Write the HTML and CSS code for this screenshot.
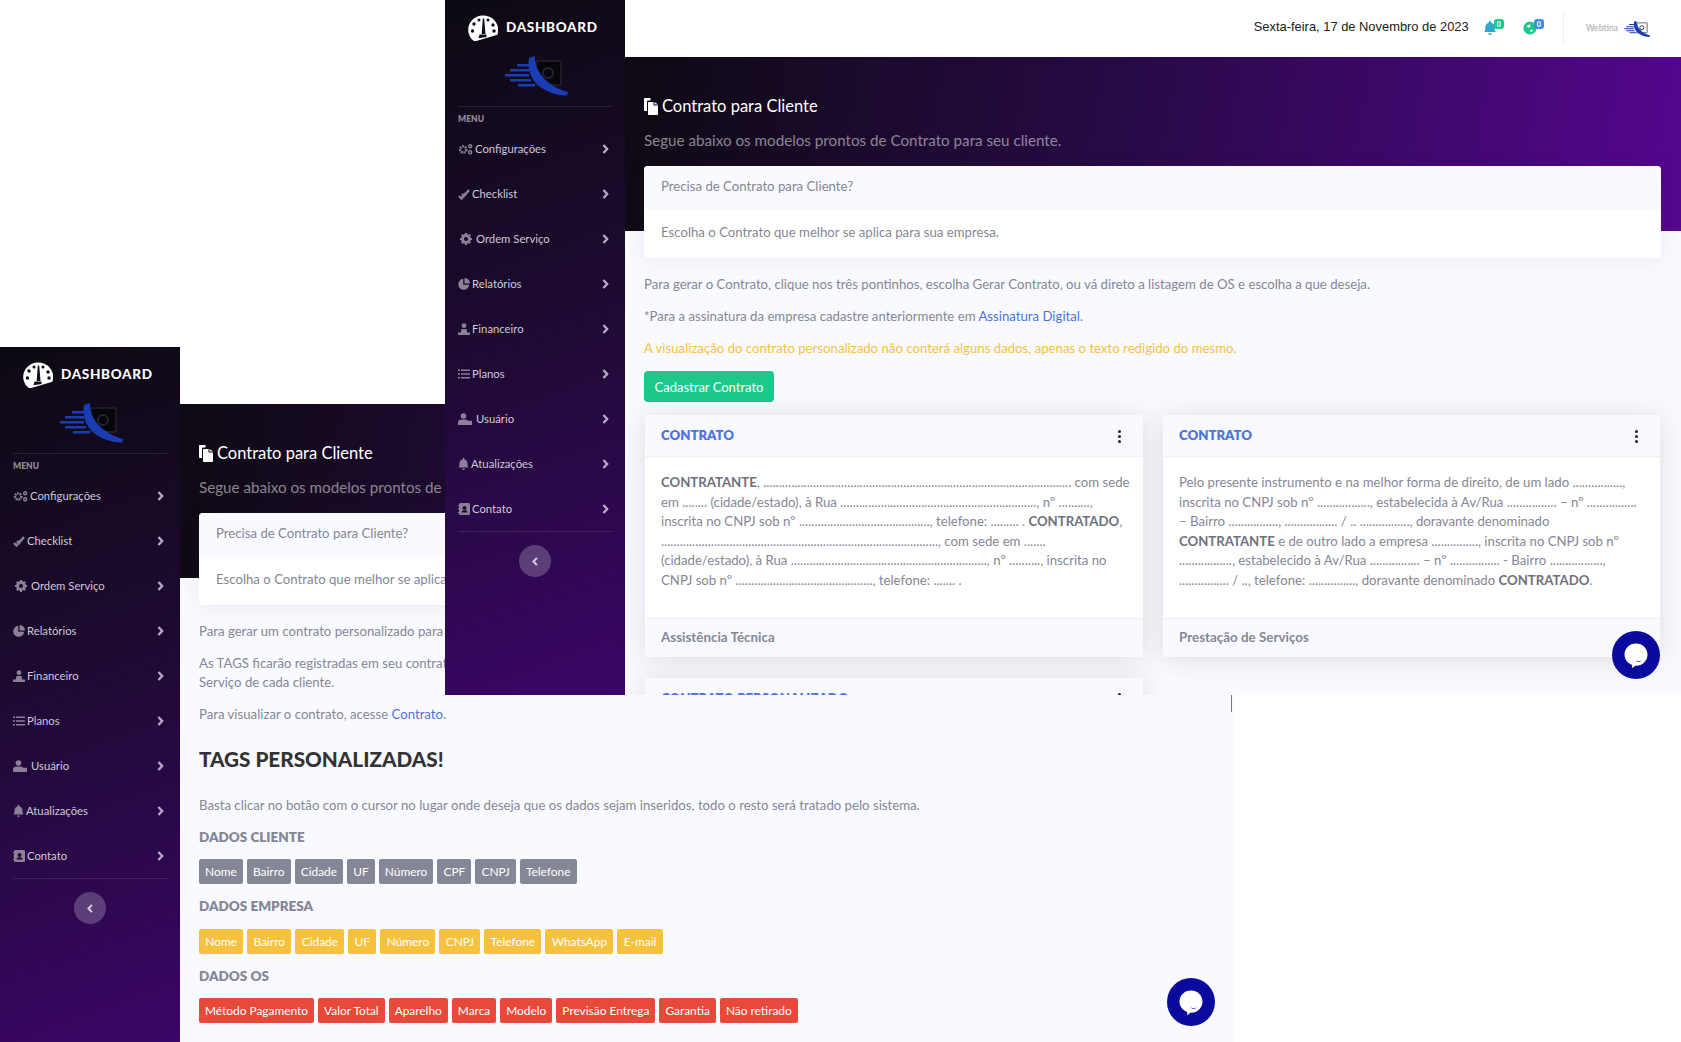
FILE: index.html
```html
<!DOCTYPE html>
<html lang="pt-BR">
<head>
    <meta charset="UTF-8">
    <meta name="viewport" content="width=device-width, initial-scale=1.0">
    <title>Contrato para Cliente</title>
    <link rel="stylesheet" href="styles.css">
</head>
<body>
    <svg class="sprite" xmlns="http://www.w3.org/2000/svg">
        <symbol id="i-gauge" viewBox="0 0 30 26">
            <path fill="#fff" d="M4 24.5C1.5 22 0 18.6 0 15 0 6.9 6.7.5 15 .5S30 6.900 30 15c0 2.200-.5 4.300-1.400 6.200L5.500 25.500z" transform="rotate(-6 15 13)"/>
            <g fill="#120c1c">
                <circle cx="6" cy="9" r="1.700"/><circle cx="11" cy="5" r="1.500"/><circle cx="20" cy="5" r="1.500"/><circle cx="25" cy="10" r="1.700"/><circle cx="4.500" cy="16" r="1.700"/><circle cx="26" cy="16" r="1.700"/>
                <path d="M14.800 3.500h1.400l1.300 15.500h-3.800z"/><path d="M11.500 19.500h7v2.500l-8 1.300z"/>
            </g>
        </symbol>
        <symbol id="i-logo" viewBox="0 0 66 42">
            <rect x="34" y="6" width="25" height="24" rx="1" fill="var(--phone-fill)" stroke="var(--phone-line)" stroke-width="1.500"/>
            <circle cx="46" cy="18" r="5" fill="none" stroke="var(--phone-line)" stroke-width="2"/>
            <g fill="#1a3db4">
                <path d="M15 9h15v2.500H15zM8 14h19v2.500H8zM3 19h24v2.500H3zM8 24h21v2.500H8zM16 29h17v2.500H16z"/>
                <path d="M27 3l6-2C32 15 44 31 66 37l-1 3.500C42 40 23 25 27 3z"/>
            </g>
        </symbol>
        <symbol id="i-cogs" viewBox="0 0 16 12">
            <circle cx="5.500" cy="6.500" r="3.300" fill="none" stroke="currentColor" stroke-width="2.600" stroke-dasharray="2 .8"/>
            <circle cx="13" cy="3" r="1.600" fill="none" stroke="currentColor" stroke-width="1.500"/>
            <circle cx="13" cy="9.500" r="1.600" fill="none" stroke="currentColor" stroke-width="1.500"/>
        </symbol>
        <symbol id="i-check" viewBox="0 0 12 12">
            <path fill="none" stroke="currentColor" stroke-width="2.400" d="M1 8l2.500 2.500L8 5M4 6l2 2 5-6"/>
        </symbol>
        <symbol id="i-cog" viewBox="0 0 12 12">
            <circle cx="6" cy="6" r="3.500" fill="none" stroke="currentColor" stroke-width="3"/>
            <path stroke="currentColor" stroke-width="2" d="M6 0v2M6 10v2M0 6h2M10 6h2M1.800 1.800l1.400 1.400M8.800 8.800l1.400 1.400M1.800 10.200l1.400-1.400M8.800 3.200l1.400-1.400"/>
        </symbol>
        <symbol id="i-pie" viewBox="0 0 12 12">
            <path fill="currentColor" d="M5.200.8v6h6A5.500 5.500 0 1 1 5.200.8zM6.500 0A5.500 5.500 0 0 1 12 5.500H6.500z"/>
        </symbol>
        <symbol id="i-money" viewBox="0 0 12 12">
            <circle cx="6" cy="2.700" r="2.400" fill="currentColor"/>
            <path fill="currentColor" d="M3.500 6h5l.8 3.500H12V12H0V9.500h2.700z"/>
        </symbol>
        <symbol id="i-list" viewBox="0 0 12 10">
            <path fill="currentColor" d="M0 .5h2v1.500H0zM3 .5h9v1.500H3zM0 4.200h2v1.500H0zM3 4.200h9v1.500H3zM0 8h2v1.500H0zM3 8h9v1.500H3z"/>
        </symbol>
        <symbol id="i-user" viewBox="0 0 14 12">
            <circle cx="5.500" cy="3" r="2.800" fill="currentColor"/>
            <path fill="currentColor" d="M0 12V9.500C0 7.500 1.500 6.500 3.500 6.500h4c1 0 2 .4 2.500 1.200H14V12z"/>
        </symbol>
        <symbol id="i-bell" viewBox="0 0 10 12">
            <path fill="currentColor" d="M5 0c.6 0 1 .4 1 1v.4c1.800.4 3 2 3 3.800 0 2.800.5 3.600 1 4.300H0c.5-.7 1-1.500 1-4.300 0-1.800 1.200-3.400 3-3.800V1c0-.6.4-1 1-1zM3.500 10.500h3C6.500 11.400 5.800 12 5 12s-1.500-.6-1.500-1.500z"/>
        </symbol>
        <symbol id="i-book" viewBox="0 0 12 12">
            <rect x="1" y="0" width="11" height="12" rx="1.500" fill="currentColor"/>
            <circle cx="6.500" cy="5" r="2" fill="#1a0b2c"/>
            <path fill="#1a0b2c" d="M3.500 9.500c0-1.500 1.200-2.200 3-2.200s3 .7 3 2.200z"/>
            <path fill="currentColor" d="M0 2h2v1H0zM0 5.500h2v1H0zM0 9h2v1H0z"/>
        </symbol>
        <symbol id="i-chevron" viewBox="0 0 8 12">
            <path fill="none" stroke="currentColor" stroke-width="2.800" d="M1.500 1.200L6 6l-4.500 4.800"/>
        </symbol>
        <symbol id="i-copy" viewBox="0 0 14 17">
            <path fill="#fff" d="M1 0h5.500v2.500H4.200C3.500 2.500 3 3 3 3.700V13H1c-.6 0-1-.4-1-1V1c0-.6.4-1 1-1z"/>
            <path fill="#fff" d="M5 4h4.500v3.500H14V16c0 .6-.4 1-1 1H5c-.6 0-1-.4-1-1V5c0-.6.4-1 1-1zM10.500 4L14 6.500h-3.500z"/>
        </symbol>
        <symbol id="i-link" viewBox="0 0 15 15">
            <circle cx="7.500" cy="7.500" r="7" fill="currentColor"/>
            <path fill="#fff" d="M4 5.500l3-2 1.200 2-2.200 2zM7.500 10l2.200-1.200 1 2-2.200 1.200z"/>
        </symbol>
        <symbol id="i-chat" viewBox="0 0 48 48">
            <circle cx="24" cy="24" r="24" fill="#0b0a9e"/>
            <path fill="#fff" d="M24 12.500c6.400 0 11.500 4.900 11.500 11 0 6.300-5.100 11.300-11.500 11.300h-.8l-3 2.500v-3.300c-4.500-1.600-7.700-5.700-7.700-10.500 0-6.100 5.100-11 11.500-11z"/>
            <path fill="#0b0a9e" d="M24 29.500c1.600.9 3.600.9 5.200 0-.5 1.800-4.700 1.800-5.200 0z"/>
        </symbol>
    </svg>

    <!-- tela de tras: tags personalizadas -->
    <section class="window window-back">
        <aside class="sidebar">
            <div class="brand">
                <svg class="brand-icon"><use href="#i-gauge"/></svg>
                <span class="brand-name">DASHBOARD</span>
            </div>
            <div class="sidebar-logo"><svg class="logo-img"><use href="#i-logo"/></svg></div>
            <div class="menu-label">MENU</div>
            <nav class="menu">
                <a class="menu-item"><svg class="ico ico-cogs"><use href="#i-cogs"/></svg><span>Configurações</span><svg class="chevron"><use href="#i-chevron"/></svg></a>
                <a class="menu-item"><svg class="ico ico-check"><use href="#i-check"/></svg><span>Checklist</span><svg class="chevron"><use href="#i-chevron"/></svg></a>
                <a class="menu-item"><svg class="ico ico-cog"><use href="#i-cog"/></svg><span>Ordem Serviço</span><svg class="chevron"><use href="#i-chevron"/></svg></a>
                <a class="menu-item"><svg class="ico ico-pie"><use href="#i-pie"/></svg><span>Relatórios</span><svg class="chevron"><use href="#i-chevron"/></svg></a>
                <a class="menu-item"><svg class="ico ico-money"><use href="#i-money"/></svg><span>Financeiro</span><svg class="chevron"><use href="#i-chevron"/></svg></a>
                <a class="menu-item"><svg class="ico ico-list"><use href="#i-list"/></svg><span>Planos</span><svg class="chevron"><use href="#i-chevron"/></svg></a>
                <a class="menu-item"><svg class="ico ico-user"><use href="#i-user"/></svg><span>Usuário</span><svg class="chevron"><use href="#i-chevron"/></svg></a>
                <a class="menu-item"><svg class="ico ico-bell"><use href="#i-bell"/></svg><span>Atualizações</span><svg class="chevron"><use href="#i-chevron"/></svg></a>
                <a class="menu-item"><svg class="ico ico-book"><use href="#i-book"/></svg><span>Contato</span><svg class="chevron"><use href="#i-chevron"/></svg></a>
            </nav>
            <div class="sidebar-end"><button class="toggle"><svg class="toggle-icon"><use href="#i-chevron"/></svg></button></div>
        </aside>
        <div class="main">
            <div class="topbar"></div>
            <div class="hero">
                <h1 class="page-title"><svg class="title-icon"><use href="#i-copy"/></svg>Contrato para Cliente</h1>
                <p class="page-sub">Segue abaixo os modelos prontos de Contrato para seu cliente.</p>
            </div>
            <div class="content">
                <div class="intro-card">
                    <div class="intro-head">Precisa de Contrato para Cliente?</div>
                    <div class="intro-body">Escolha o Contrato que melhor se aplica para sua empresa.</div>
                </div>
                <p class="txt">Para gerar um contrato personalizado para seu cliente, utilize as TAGS abaixo.</p>
                <p class="txt">As TAGS ficarão registradas em seu contrato e serão preenchidas automaticamente na Ordem de<br>Serviço de cada cliente.</p>
                <p class="txt">Para visualizar o contrato, acesse <a class="link">Contrato</a>.</p>
                <h2 class="tags-title">TAGS PERSONALIZADAS!</h2>
                <p class="txt txt-basta">Basta clicar no botão com o cursor no lugar onde deseja que os dados sejam inseridos, todo o resto será tratado pelo sistema.</p>
                <h3 class="tag-label">DADOS CLIENTE</h3>
                <div class="tag-row">
                    <span class="tag tag-gray">Nome</span><span class="tag tag-gray">Bairro</span><span class="tag tag-gray">Cidade</span><span class="tag tag-gray">UF</span><span class="tag tag-gray">Número</span><span class="tag tag-gray">CPF</span><span class="tag tag-gray">CNPJ</span><span class="tag tag-gray">Telefone</span>
                </div>
                <h3 class="tag-label">DADOS EMPRESA</h3>
                <div class="tag-row">
                    <span class="tag tag-yellow">Nome</span><span class="tag tag-yellow">Bairro</span><span class="tag tag-yellow">Cidade</span><span class="tag tag-yellow">UF</span><span class="tag tag-yellow">Número</span><span class="tag tag-yellow">CNPJ</span><span class="tag tag-yellow">Telefone</span><span class="tag tag-yellow">WhatsApp</span><span class="tag tag-yellow">E-mail</span>
                </div>
                <h3 class="tag-label">DADOS OS</h3>
                <div class="tag-row">
                    <span class="tag tag-red">Método Pagamento</span><span class="tag tag-red">Valor Total</span><span class="tag tag-red">Aparelho</span><span class="tag tag-red">Marca</span><span class="tag tag-red">Modelo</span><span class="tag tag-red">Previsão Entrega</span><span class="tag tag-red">Garantia</span><span class="tag tag-red">Não retirado</span>
                </div>
            </div>
        </div>
        <svg class="chat chat-back"><use href="#i-chat"/></svg>
        <div class="caret"></div>
    </section>

    <!-- tela da frente: contratos -->
    <section class="window window-front">
        <aside class="sidebar">
            <div class="brand">
                <svg class="brand-icon"><use href="#i-gauge"/></svg>
                <span class="brand-name">DASHBOARD</span>
            </div>
            <div class="sidebar-logo"><svg class="logo-img"><use href="#i-logo"/></svg></div>
            <div class="menu-label">MENU</div>
            <nav class="menu">
                <a class="menu-item"><svg class="ico ico-cogs"><use href="#i-cogs"/></svg><span>Configurações</span><svg class="chevron"><use href="#i-chevron"/></svg></a>
                <a class="menu-item"><svg class="ico ico-check"><use href="#i-check"/></svg><span>Checklist</span><svg class="chevron"><use href="#i-chevron"/></svg></a>
                <a class="menu-item"><svg class="ico ico-cog"><use href="#i-cog"/></svg><span>Ordem Serviço</span><svg class="chevron"><use href="#i-chevron"/></svg></a>
                <a class="menu-item"><svg class="ico ico-pie"><use href="#i-pie"/></svg><span>Relatórios</span><svg class="chevron"><use href="#i-chevron"/></svg></a>
                <a class="menu-item"><svg class="ico ico-money"><use href="#i-money"/></svg><span>Financeiro</span><svg class="chevron"><use href="#i-chevron"/></svg></a>
                <a class="menu-item"><svg class="ico ico-list"><use href="#i-list"/></svg><span>Planos</span><svg class="chevron"><use href="#i-chevron"/></svg></a>
                <a class="menu-item"><svg class="ico ico-user"><use href="#i-user"/></svg><span>Usuário</span><svg class="chevron"><use href="#i-chevron"/></svg></a>
                <a class="menu-item"><svg class="ico ico-bell"><use href="#i-bell"/></svg><span>Atualizações</span><svg class="chevron"><use href="#i-chevron"/></svg></a>
                <a class="menu-item"><svg class="ico ico-book"><use href="#i-book"/></svg><span>Contato</span><svg class="chevron"><use href="#i-chevron"/></svg></a>
            </nav>
            <div class="sidebar-end"><button class="toggle"><svg class="toggle-icon"><use href="#i-chevron"/></svg></button></div>
        </aside>
        <div class="main">
            <div class="topbar">
                <span class="today">Sexta-feira, 17 de Novembro de 2023</span>
                <span class="top-icon">
                    <svg class="top-svg bell-blue"><use href="#i-bell"/></svg>
                    <span class="badge badge-green">0</span>
                </span>
                <span class="top-icon">
                    <svg class="top-svg link-green"><use href="#i-link"/></svg>
                    <span class="badge badge-blue">0</span>
                </span>
                <span class="top-divider"></span>
                <span class="user-name">Webtina</span>
                <svg class="user-logo"><use href="#i-logo"/></svg>
            </div>
            <div class="hero">
                <h1 class="page-title"><svg class="title-icon"><use href="#i-copy"/></svg>Contrato para Cliente</h1>
                <p class="page-sub">Segue abaixo os modelos prontos de Contrato para seu cliente.</p>
            </div>
            <div class="content">
                <div class="intro-card">
                    <div class="intro-head">Precisa de Contrato para Cliente?</div>
                    <div class="intro-body">Escolha o Contrato que melhor se aplica para sua empresa.</div>
                </div>
                <p class="txt">Para gerar o Contrato, clique nos três pontinhos, escolha Gerar Contrato, ou vá direto a listagem de OS e escolha a que deseja.</p>
                <p class="txt">*Para a assinatura da empresa cadastre anteriormente em <a class="link">Assinatura Digital</a>.</p>
                <p class="txt txt-warn">A visualização do contrato personalizado não conterá alguns dados, apenas o texto redigido do mesmo.</p>
                <button class="btn-green">Cadastrar Contrato</button>
                <div class="contract-grid">
                    <div class="contract-card">
                        <div class="contract-head"><span>CONTRATO</span><span class="kebab"><i></i><i></i><i></i></span></div>
                        <div class="contract-body">
                            <b>CONTRATANTE</b>, ................................................................................................... com sede<br>
                            em ........ (cidade/estado), à Rua ..............................................................., nº ..........,<br>
                            inscrita no CNPJ sob nº .........................................., telefone: ......... . <b>CONTRATADO</b>,<br>
                            ........................................................................................., com sede em .......<br>
                            (cidade/estado), à Rua ..............................................................., nº .........., inscrita no<br>
                            CNPJ sob nº ............................................, telefone: ....... .
                        </div>
                        <div class="contract-foot">Assistência Técnica</div>
                    </div>
                    <div class="contract-card">
                        <div class="contract-head"><span>CONTRATO</span><span class="kebab"><i></i><i></i><i></i></span></div>
                        <div class="contract-body">
                            Pelo presente instrumento e na melhor forma de direito, de um lado ................,<br>
                            inscrita no CNPJ sob nº ................., estabelecida à Av/Rua ................ – nº ................<br>
                            – Bairro ................, ................. / .. ................, doravante denominado<br>
                            <b>CONTRATANTE</b> e de outro lado a empresa ..............., inscrita no CNPJ sob nº<br>
                            ................., estabelecido à Av/Rua ................ – nº ................ - Bairro .................,<br>
                            ................ / .., telefone: ..............., doravante denominado <b>CONTRATADO</b>.
                        </div>
                        <div class="contract-foot">Prestação de Serviços</div>
                    </div>
                    <div class="contract-card">
                        <div class="contract-head"><span>CONTRATO PERSONALIZADO</span><span class="kebab"><i></i><i></i><i></i></span></div>
                    </div>
                </div>
            </div>
        </div>
        <svg class="chat chat-front"><use href="#i-chat"/></svg>
    </section>
</body>
</html>
```

FILE: styles.css
```css
* {
    box-sizing: border-box;
}
html, body {
    margin: 0;
    padding: 0;
}
body {
    position: relative;
    width: 1681px;
    height: 1042px;
    overflow: hidden;
    background-color: #fff;
    font-family: Lato, "Noto Sans", sans-serif;
    font-size: 13.2px;
    line-height: 19.5px;
    color: #858796;
}
.sprite {
    display: none;
}

/* telas sobrepostas */
.window {
    position: absolute;
    display: flex;
    height: 695px;
    overflow: hidden;
    background-color: #f9faff;
}
.window-back {
    left: 0;
    top: 347px;
    width: 1234px;
    z-index: 1;
}
.window-front {
    left: 445px;
    top: 0;
    width: 1236px;
    z-index: 2;
}

/* sidebar */
.sidebar {
    flex: 0 0 180px;
    display: flex;
    flex-direction: column;
    background: linear-gradient(160deg, #0d0a12 0%, #1c0a30 45%, #3c0668 100%);
    color: #d6cfe0;
}
.brand {
    height: 55px;
    display: flex;
    align-items: center;
    padding-left: 23px;
    gap: 8px;
}
.brand-icon {
    width: 30px;
    height: 26px;
}
.brand-name {
    font-size: 13.5px;
    font-weight: 900;
    letter-spacing: 0.7px;
    color: #fff;
}
.sidebar-logo {
    height: 52px;
    display: flex;
    justify-content: center;
    margin: 0 13px;
    border-bottom: 1px solid rgba(255, 255, 255, 0.1);
}
.logo-img {
    width: 66px;
    height: 42px;
    --phone-fill: #07060b;
    --phone-line: #26222e;
}
.menu-label {
    height: 19px;
    padding: 6px 0 0 13px;
    font-size: 8.5px;
    line-height: 13px;
    font-weight: 800;
    color: #8d8499;
}
.menu {
    display: flex;
    flex-direction: column;
    margin: 0 13px;
    border-bottom: 1px solid rgba(255, 255, 255, 0.1);
}
.menu-item {
    height: 45px;
    display: flex;
    align-items: center;
    gap: 2px;
    font-size: 11.3px;
    color: #cfc8d8;
}
.menu-item span {
    flex: 1;
}
.ico {
    color: #8b8098;
    width: 12px;
    height: 12px;
}
.ico-cogs {
    width: 15px;
}
.ico-cog {
    margin: 0 2px;
}
.ico-user {
    width: 14px;
    margin-right: 2px;
}
.ico-bell {
    width: 11px;
}
.chevron {
    width: 7px;
    height: 10px;
    color: #b9a9c8;
    margin-right: 3px;
}
.sidebar-end {
    display: flex;
    justify-content: center;
    padding-top: 13px;
}
.toggle {
    width: 32px;
    height: 32px;
    border: none;
    padding: 0;
    border-radius: 50%;
    background-color: rgba(255, 255, 255, 0.22);
    display: flex;
    align-items: center;
    justify-content: center;
}
.toggle-icon {
    width: 6px;
    height: 9px;
    color: #d5cfdc;
    transform: scaleX(-1);
}

/* area principal */
.main {
    flex: 1;
    min-width: 0;
}
.topbar {
    height: 57px;
    background-color: #fff;
    display: flex;
    align-items: center;
    justify-content: flex-end;
    padding-right: 31px;
}
.today {
    font-family: "Liberation Sans", Arial, sans-serif;
    font-size: 12.9px;
    color: #222;
    margin-right: 14px;
    margin-bottom: 4px;
}
.top-icon {
    position: relative;
    width: 21px;
    height: 16px;
    margin-right: 19px;
    margin-bottom: 4px;
}
.top-svg {
    position: absolute;
    left: 0;
    bottom: 0;
    width: 14px;
    height: 14px;
}
.bell-blue {
    color: #2fa9c9;
}
.link-green {
    color: #1cc88a;
}
.badge {
    position: absolute;
    right: 0;
    top: 0;
    width: 10px;
    height: 10px;
    border-radius: 3px;
    font-size: 7px;
    line-height: 10px;
    font-weight: 700;
    text-align: center;
    color: #fff;
}
.badge-green {
    background-color: #1cc88a;
}
.badge-blue {
    background-color: #3f8fd8;
}
.top-divider {
    width: 1px;
    height: 32px;
    background-color: #eaecf4;
    margin-right: 22px;
}
.user-name {
    font-size: 8.5px;
    font-weight: 700;
    color: #bbb;
    margin-right: 5px;
}
.user-logo {
    width: 27px;
    height: 26px;
    --phone-fill: #fff;
    --phone-line: #111;
}
.hero {
    height: 174px;
    padding: 37px 20px 0 19px;
    background: linear-gradient(100deg, #0e0a13 0%, #260a44 45%, #55068f 100%);
}
.page-title {
    margin: 0 0 11px;
    display: flex;
    align-items: center;
    gap: 4px;
    font-size: 16.5px;
    line-height: 24px;
    font-weight: 400;
    color: #fff;
}
.title-icon {
    width: 14px;
    height: 17px;
}
.page-sub {
    margin: 0;
    font-size: 15.2px;
    line-height: 22px;
    white-space: nowrap;
    color: rgba(255, 255, 255, 0.5);
}
.content {
    position: relative;
    margin-top: -65px;
    padding: 0 20px 0 19px;
}
.intro-card {
    height: 92px;
    margin-bottom: 17px;
    border-radius: 4px;
    background-color: #fff;
    box-shadow: 0 2px 20px rgba(58, 59, 69, 0.08);
    overflow: hidden;
}
.intro-head {
    height: 44px;
    padding: 11px 17px;
    background-color: #f9faff;
}
.intro-body {
    padding: 13px 17px;
}
.txt {
    margin: 0 0 13px;
    line-height: 19px;
}
.txt-warn {
    color: #f6c23e;
    margin-bottom: 13px;
}
.link {
    color: #4e73df;
}
.btn-green {
    display: block;
    height: 31px;
    width: 130px;
    margin-bottom: 13px;
    border: none;
    border-radius: 4px;
    background-color: #1cc88a;
    color: #fff;
    font-family: inherit;
    font-size: 13px;
}
.contract-grid {
    display: grid;
    grid-template-columns: 498px 497px;
    column-gap: 20px;
    row-gap: 21px;
    padding-left: 1px;
}
.contract-card {
    background-color: #fff;
    border-radius: 4px;
    box-shadow: 0 2px 24px rgba(58, 59, 69, 0.15);
}
.contract-head {
    height: 42px;
    padding: 1px 16px 0;
    display: flex;
    align-items: center;
    justify-content: space-between;
    background-color: #f9faff;
    border-bottom: 1px solid #eef0f6;
    font-weight: 800;
    color: #4e73df;
}
.kebab {
    display: flex;
    flex-direction: column;
    gap: 2px;
    margin-right: 6px;
}
.kebab i {
    width: 3px;
    height: 3px;
    border-radius: 50%;
    background-color: #222;
}
.contract-body {
    height: 161px;
    padding: 16px;
    white-space: nowrap;
}
.contract-body b {
    font-weight: 700;
    color: #6e707e;
}
.contract-foot {
    height: 39px;
    padding: 9px 16px;
    background-color: #f9faff;
    border-top: 1px solid #eef0f6;
    font-size: 13.4px;
    font-weight: 700;
}

/* tags */
.tags-title {
    margin: 21px 0 21.5px;
    font-size: 20.7px;
    line-height: 29px;
    font-weight: 900;
    color: #333;
}
.txt-basta {
    margin-bottom: 13px;
}
.tag-label {
    margin: 0 0 12px;
    font-size: 13.5px;
    line-height: 19.5px;
    font-weight: 800;
    color: #858796;
}
.tag-row {
    display: flex;
    gap: 4px;
    margin-bottom: 13px;
}
.tag {
    height: 25px;
    padding: 0 6px;
    border-radius: 2px;
    font-size: 11.9px;
    line-height: 25px;
    color: #fff;
}
.tag-gray {
    background-color: #858796;
    padding: 0 6.1px;
}
.tag-yellow {
    background-color: #f6c23e;
    padding: 0 6.3px;
}
.tag-red {
    background-color: #e74a3b;
}

/* sobre o conteudo */
.chat {
    position: absolute;
    width: 48px;
    height: 48px;
}
.chat-front {
    right: 21px;
    bottom: 16px;
}
.chat-back {
    left: 1167px;
    bottom: 16px;
}
.caret {
    position: absolute;
    left: 1231px;
    top: 347px;
    width: 1px;
    height: 18px;
    background-color: #777;
}
```
